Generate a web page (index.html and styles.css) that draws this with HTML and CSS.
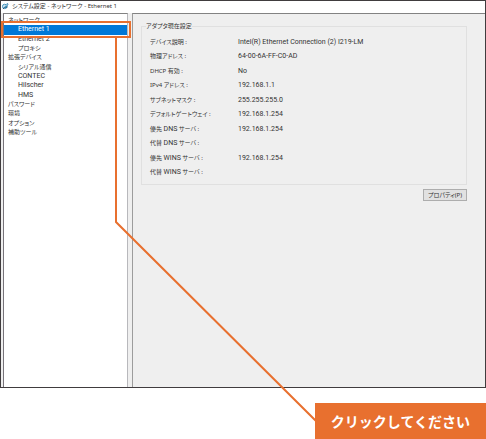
FILE: index.html
```html
<!DOCTYPE html>
<html lang="ja">
<head>
<meta charset="utf-8">
<title>システム設定</title>
<link rel="stylesheet" href="styles.css">
</head>
<body>
<main class="window">
  <header class="titlebar">
    <svg class="app-icon" viewBox="0 0 16 16" aria-hidden="true">
      <circle cx="6" cy="9" r="5" fill="#c9e4f3" stroke="#3187b5" stroke-width="2"/>
      <path d="M5 11 12 1l3 3-7 9z" fill="#247bad"/>
      <path d="M7 9l5-5" stroke="#fff" stroke-width="2"/>
      <path d="M2 15l4-4M10 12l3-2" stroke="#25455e" stroke-width="2"/>
    </svg>
    <h1 class="title">システム設定 - ネットワーク - Ethernet 1</h1>
  </header>
  <div class="content">
    <nav class="sidebar">
      <ul class="tree">
        <li><a class="item" href="#">ネットワーク</a></li>
        <li><a class="item child latin selected" href="#" aria-current="page">Ethernet 1</a></li>
        <li><a class="item child latin" href="#">Ethernet 2</a></li>
        <li><a class="item child" href="#">プロキシ</a></li>
        <li><a class="item" href="#">拡張デバイス</a></li>
        <li><a class="item child" href="#">シリアル通信</a></li>
        <li><a class="item child latin" href="#">CONTEC</a></li>
        <li><a class="item child latin" href="#">Hilscher</a></li>
        <li><a class="item child latin" href="#">HMS</a></li>
        <li><a class="item" href="#">パスワード</a></li>
        <li><a class="item" href="#">環境</a></li>
        <li><a class="item" href="#">オプション</a></li>
        <li><a class="item" href="#">補助ツール</a></li>
      </ul>
    </nav>
    <section class="panel">
      <fieldset class="group">
        <legend class="legend">アダプタ現在設定</legend>
        <dl class="settings">
          <dt>デバイス説明 :</dt><dd>Intel(R) Ethernet Connection (2) I219-LM</dd>
          <dt>物理アドレス :</dt><dd>64-00-6A-FF-C0-AD</dd>
          <dt>DHCP 有効 :</dt><dd>No</dd>
          <dt>IPv4 アドレス :</dt><dd>192.168.1.1</dd>
          <dt>サブネットマスク :</dt><dd>255.255.255.0</dd>
          <dt>デフォルトゲートウェイ :</dt><dd>192.168.1.254</dd>
          <dt>優先 <span class="latin">DNS</span> サーバ :</dt><dd>192.168.1.254</dd>
          <dt>代替 <span class="latin">DNS</span> サーバ :</dt><dd></dd>
          <dt>優先 <span class="latin">WINS</span> サーバ :</dt><dd>192.168.1.254</dd>
          <dt>代替 <span class="latin">WINS</span> サーバ :</dt><dd></dd>
        </dl>
      </fieldset>
      <button class="button" type="button">プロパティ(P)</button>
    </section>
  </div>
</main>
<p class="callout">クリックしてください</p>
<svg class="leader" viewBox="0 0 486 439" preserveAspectRatio="none" aria-hidden="true">
  <path d="M116 36V222L316 421"/>
</svg>
</body>
</html>
```
FILE: styles.css
```css
* {
  box-sizing: border-box;
}

body {
  position: relative;
  display: flex;
  flex-direction: column;
  min-height: 100vh;
  margin: 0;
  background: #fff;
  color: #333;
  font: 6px/9px "Noto Sans", "Noto Sans CJK JP", sans-serif;
  font-feature-settings: "palt";
}

.window {
  flex: 1;
  display: flex;
  flex-direction: column;
  border: 1px solid #403c3e;
}

.titlebar {
  display: flex;
  align-items: center;
  gap: 3px;
  height: 12px;
  padding: 0 0 2px 1px;
}

.app-icon {
  width: 7px;
  height: 8px;
}

.title {
  margin: 0;
  font-size: 6px;
  font-weight: 400;
}

.content {
  flex: 1;
  display: flex;
  gap: 4px;
  padding-left: 2px;
  background: #efefef;
}

.sidebar {
  flex: 0 0 125px;
  border: 1px solid #b8b8bc;
  border-top-color: #828282;
  border-left-color: #77737a;
  border-bottom: 0;
  background: #fff;
}

.tree {
  display: grid;
  grid-template-rows: repeat(13, 1fr);
  height: 123px;
  margin: 0;
  padding: 2px 0 0;
  list-style: none;
}

.item {
  display: flex;
  align-items: center;
  height: 100%;
  padding-left: 4px;
  color: inherit;
  text-decoration: none;
  white-space: nowrap;
}

.child {
  padding-left: 14px;
}

.latin,
.settings dd {
  font-family: Roboto, sans-serif;
  font-size: 7px;
}

.selected {
  position: relative;
  background: #0078d7;
  color: #fff;
}

.selected::after {
  content: "";
  position: absolute;
  inset: -4px -4px -3px -3px;
  border: 2px solid #e8702f;
}

.panel {
  flex: 1;
  padding: 8px 18px 8px 8px;
  border-top: 1px solid #828282;
  border-left: 1px solid #9c9c9c;
}

.group {
  margin: 0;
  padding: 4px 8px;
  border: 1px solid #e0e0e0;
}

.legend {
  margin-left: -4px;
  padding: 0;
}

.settings {
  display: grid;
  grid-template-columns: 88px 1fr;
  grid-template-rows: repeat(10, 1fr);
  align-items: center;
  height: 145px;
  margin: 0;
}

.settings dd {
  margin: 0;
}

.button {
  display: block;
  width: 44px;
  height: 12px;
  margin: 4px 0 0 auto;
  padding: 0;
  border: 1px solid #adadad;
  background: #e1e1e1;
  color: inherit;
  font: inherit;
  font-feature-settings: inherit;
}

.callout {
  align-self: flex-end;
  margin: 15px 0 0;
  padding: 6px 16px;
  background: #e8702f;
  color: #fff;
  font: 700 14px/24px "Noto Sans CJK JP", sans-serif;
  font-feature-settings: normal;
}

.leader {
  position: absolute;
  inset: 0;
  width: 100%;
  height: 100%;
  pointer-events: none;
}

.leader path {
  fill: none;
  stroke: #e8702f;
  stroke-width: 2px;
  vector-effect: non-scaling-stroke;
}
```
